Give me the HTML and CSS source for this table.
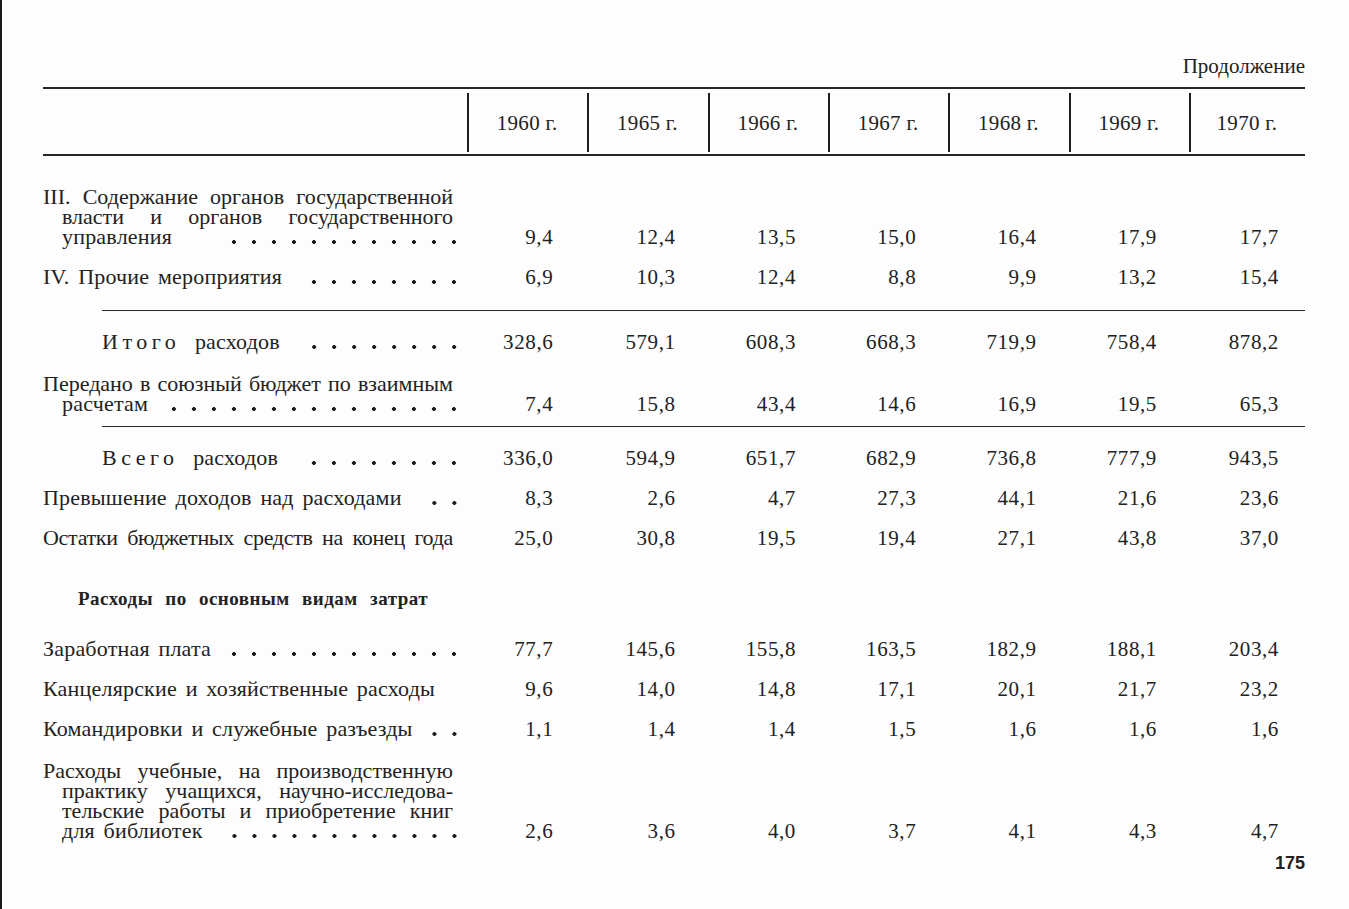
FILE: index.html
```html
<!DOCTYPE html>
<html lang="ru">
<head>
<meta charset="utf-8">
<title>Продолжение</title>
<link rel="stylesheet" href="styles.css">
</head>
<body>
<div class="page">
  <div class="cont">Продолжение</div>
  <div class="table">
    <div class="row thead">
      <div class="lab"></div>
      <div class="yr">1960 г.</div>
      <div class="yr">1965 г.</div>
      <div class="yr">1966 г.</div>
      <div class="yr">1967 г.</div>
      <div class="yr">1968 г.</div>
      <div class="yr">1969 г.</div>
      <div class="yr">1970 г.</div>
    </div>

    <div class="row m21">
      <div class="lab">
        <div class="ln jl">III. Содержание органов государственной</div>
        <div class="ln jl ind">власти и органов государственного</div>
        <div class="ln ind lead"><span>управления</span><i class="dots dots-far"></i></div>
      </div>
      <div class="num">9,4</div><div class="num">12,4</div><div class="num">13,5</div><div class="num">15,0</div><div class="num">16,4</div><div class="num">17,9</div><div class="num">17,7</div>
    </div>

    <div class="row">
      <div class="lab">
        <div class="ln lead"><span>IV. Прочие мероприятия</span><i class="dots"></i></div>
      </div>
      <div class="num">6,9</div><div class="num">10,3</div><div class="num">12,4</div><div class="num">8,8</div><div class="num">9,9</div><div class="num">13,2</div><div class="num">15,4</div>
    </div>

    <div class="rule m13"></div>

    <div class="row m11">
      <div class="lab">
        <div class="ln lead total"><span><em>Итого</em> расходов</span><i class="dots"></i></div>
      </div>
      <div class="num">328,6</div><div class="num">579,1</div><div class="num">608,3</div><div class="num">668,3</div><div class="num">719,9</div><div class="num">758,4</div><div class="num">878,2</div>
    </div>

    <div class="row m2">
      <div class="lab">
        <div class="ln jl">Передано в союзный бюджет по взаимным</div>
        <div class="ln ind lead"><span>расчетам</span><i class="dots"></i></div>
      </div>
      <div class="num">7,4</div><div class="num">15,8</div><div class="num">43,4</div><div class="num">14,6</div><div class="num">16,9</div><div class="num">19,5</div><div class="num">65,3</div>
    </div>

    <div class="rule m2"></div>

    <div class="row m11">
      <div class="lab">
        <div class="ln lead total"><span><em>Всего</em> расходов</span><i class="dots"></i></div>
      </div>
      <div class="num">336,0</div><div class="num">594,9</div><div class="num">651,7</div><div class="num">682,9</div><div class="num">736,8</div><div class="num">777,9</div><div class="num">943,5</div>
    </div>

    <div class="row">
      <div class="lab">
        <div class="ln lead"><span>Превышение доходов над расходами</span><i class="dots"></i></div>
      </div>
      <div class="num">8,3</div><div class="num">2,6</div><div class="num">4,7</div><div class="num">27,3</div><div class="num">44,1</div><div class="num">21,6</div><div class="num">23,6</div>
    </div>

    <div class="row">
      <div class="lab">
        <div class="ln jl tight">Остатки бюджетных средств на конец года</div>
      </div>
      <div class="num">25,0</div><div class="num">30,8</div><div class="num">19,5</div><div class="num">19,4</div><div class="num">27,1</div><div class="num">43,8</div><div class="num">37,0</div>
    </div>

    <div class="section m21">Расходы по основным видам затрат</div>

    <div class="row m10">
      <div class="lab">
        <div class="ln lead"><span>Заработная плата</span><i class="dots"></i></div>
      </div>
      <div class="num">77,7</div><div class="num">145,6</div><div class="num">155,8</div><div class="num">163,5</div><div class="num">182,9</div><div class="num">188,1</div><div class="num">203,4</div>
    </div>

    <div class="row">
      <div class="lab">
        <div class="ln">Канцелярские и хозяйственные расходы</div>
      </div>
      <div class="num">9,6</div><div class="num">14,0</div><div class="num">14,8</div><div class="num">17,1</div><div class="num">20,1</div><div class="num">21,7</div><div class="num">23,2</div>
    </div>

    <div class="row">
      <div class="lab">
        <div class="ln lead"><span>Командировки и служебные разъезды</span><i class="dots"></i></div>
      </div>
      <div class="num">1,1</div><div class="num">1,4</div><div class="num">1,4</div><div class="num">1,5</div><div class="num">1,6</div><div class="num">1,6</div><div class="num">1,6</div>
    </div>

    <div class="row m2">
      <div class="lab">
        <div class="ln jl">Расходы учебные, на производственную</div>
        <div class="ln jl ind">практику учащихся, научно-исследова-</div>
        <div class="ln jl ind">тельские работы и приобретение книг</div>
        <div class="ln ind lead"><span>для библиотек</span><i class="dots"></i></div>
      </div>
      <div class="num">2,6</div><div class="num">3,6</div><div class="num">4,0</div><div class="num">3,7</div><div class="num">4,1</div><div class="num">4,3</div><div class="num">4,7</div>
    </div>
  </div>
  <div class="folio">175</div>
</div>
</body>
</html>
```

FILE: styles.css
```css
html, body {
  margin: 0;
  padding: 0;
  background: #fdfdfd;
}

body {
  min-height: 909px;
  border-left: 2px solid #1a1a1a;
  box-sizing: border-box;
  font-family: "Liberation Serif", "Times New Roman", serif;
  color: #222;
}

.page {
  width: 1262px;
  padding: 54px 0 0 41px;
}

.cont {
  font-size: 21px;
  line-height: 24px;
  text-align: right;
  margin-bottom: 9px;
}

.table {
  font-size: 21px;
}

.row {
  display: grid;
  grid-template-columns: 424px repeat(6, 120.33px) 116px;
  align-items: end;
  padding: 10px 0;
  line-height: 20px;
}

.thead {
  padding: 0;
  height: 65px;
  border-top: 2px solid #262626;
  border-bottom: 2px solid #262626;
  align-items: stretch;
}

.yr {
  border-left: 2px solid #1e1e1e;
  margin: 4px 0 2px;
  display: flex;
  align-items: center;
  justify-content: center;
  padding-right: 2px;
  letter-spacing: 0.3px;
}

.lab {
  padding-right: 14px;
  font-size: 22px;
  letter-spacing: 0.2px;
  word-spacing: 3px;
}

.ln {
  height: 20px;
  white-space: nowrap;
}

.jl {
  text-align: justify;
  text-align-last: justify;
  white-space: normal;
  word-spacing: 0;
  letter-spacing: 0;
}

.tight {
  letter-spacing: -0.3px;
}

.ind {
  padding-left: 19px;
}

.lead {
  display: flex;
}

.lead span {
  flex: none;
}

.dots {
  flex: 1;
  margin-left: 18px;
  margin-right: -4px;
  background-image: radial-gradient(circle at 10px 15px, #1a1a1a 0 1.6px, transparent 2.2px);
  background-size: 20px 20px;
  background-repeat: repeat-x;
  background-position: right -7px top 0;
}

.dots-far {
  margin-left: 46px;
}

.total span {
  padding-left: 59px;
}

.total em {
  font-style: normal;
  letter-spacing: 4.5px;
  margin-right: 6px;
}

.num {
  text-align: right;
  padding-right: 32px;
  letter-spacing: 0.6px;
}

.num:nth-child(2) {
  padding-right: 34px;
}

.num:last-child {
  padding-right: 26px;
}

.rule {
  margin-left: 59px;
  border-top: 1.5px solid #2a2a2a;
}

.section {
  font-family: "Liberation Serif", "Times New Roman", serif;
  font-weight: bold;
  font-size: 19px;
  line-height: 20px;
  padding: 10px 0 10px 35px;
  word-spacing: 7px;
  letter-spacing: 0.5px;
}

.folio {
  font-family: "Liberation Sans", Arial, sans-serif;
  font-weight: bold;
  font-size: 18px;
  line-height: 20px;
  text-align: right;
  margin-top: 2px;
}

.m2 { margin-top: 2px; }
.m10 { margin-top: 10px; }
.m11 { margin-top: 11px; }
.m13 { margin-top: 13px; }
.m21 { margin-top: 21px; }
```
